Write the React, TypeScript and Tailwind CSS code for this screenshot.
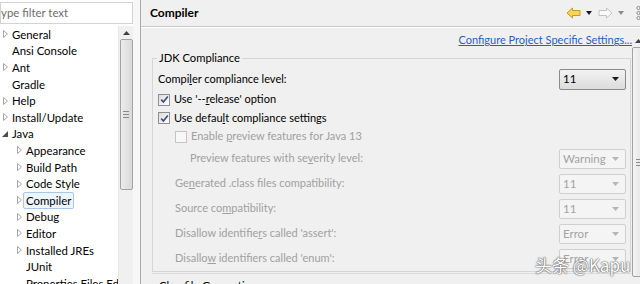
import React from "react";

const font = { fontFamily: 'Lato, "Noto Sans CJK SC", sans-serif' };

type Node = { label: string; level: number; arrow?: "closed" | "open"; selected?: boolean };

const tree: Node[] = [
  { label: "General", level: 0, arrow: "closed" },
  { label: "Ansi Console", level: 0 },
  { label: "Ant", level: 0, arrow: "closed" },
  { label: "Gradle", level: 0 },
  { label: "Help", level: 0, arrow: "closed" },
  { label: "Install/Update", level: 0, arrow: "closed" },
  { label: "Java", level: 0, arrow: "open" },
  { label: "Appearance", level: 1, arrow: "closed" },
  { label: "Build Path", level: 1, arrow: "closed" },
  { label: "Code Style", level: 1, arrow: "closed" },
  { label: "Compiler", level: 1, arrow: "closed", selected: true },
  { label: "Debug", level: 1, arrow: "closed" },
  { label: "Editor", level: 1, arrow: "closed" },
  { label: "Installed JREs", level: 1, arrow: "closed" },
  { label: "JUnit", level: 1 },
  { label: "Properties Files Editor", level: 1 },
];

function TreeArrow({ kind }: { kind?: "closed" | "open" }) {
  if (!kind) return <span className="w-[11px] shrink-0" />;
  return (
    <svg width="11" height="10" viewBox="0 0 11 10" className="shrink-0">
      {kind === "closed" ? (
        <path d="M3.5 1.5 L7.5 5 L3.5 8.5 Z" fill="none" stroke="#a6a6a6" strokeWidth="1" />
      ) : (
        <path d="M8 2 L8 8 L2 8 Z" fill="#4d4d4d" />
      )}
    </svg>
  );
}

function Check({ checked, disabled }: { checked?: boolean; disabled?: boolean }) {
  return (
    <span
      className={`flex h-[12px] w-[12px] shrink-0 items-center justify-center border ${
        disabled ? "border-[#c4c4c4] bg-[#f7f7f7]" : "border-[#8e8f8f] bg-gradient-to-br from-[#dcdcdc] to-[#ffffff]"
      }`}
    >
      {checked && (
        <svg width="9" height="9" viewBox="0 0 9 9">
          <path d="M1.2 4.6 L3.4 7 L7.8 1.4" fill="none" stroke="#3d4c7a" strokeWidth="1.6" />
        </svg>
      )}
    </span>
  );
}

function Select({ value, disabled, tall }: { value: string; disabled?: boolean; tall?: boolean }) {
  return (
    <div
      className={`flex w-[67px] shrink-0 items-center justify-between rounded-[2px] border pl-[3px] pr-[6px] text-[11.5px] ${
        tall ? "h-[21px]" : "h-[20px]"
      } ${
        disabled
          ? "border-[#cfcfcf] bg-[#f4f4f4] text-[#a3a3a3]"
          : "border-[#8a8a8a] bg-gradient-to-b from-[#f2f2f2] to-[#dcdcdc] text-black"
      }`}
    >
      <span>{value}</span>
      <svg width="7" height="4" viewBox="0 0 7 4">
        <path d="M0 0 L7 0 L3.5 4 Z" fill={disabled ? "#b5b5b5" : "#1a1a1a"} />
      </svg>
    </div>
  );
}

function Row({ children, indent, sel, h = "h-[25px]" }: { children: React.ReactNode; indent: string; sel?: React.ReactNode; h?: string }) {
  return (
    <div className={`flex items-center justify-between ${h} ${indent}`}>
      <div className="flex items-center gap-[4px] whitespace-nowrap">{children}</div>
      {sel}
    </div>
  );
}

export default function App() {
  return (
    <div className="relative flex h-[284px] w-[640px] overflow-hidden bg-[#f0f0f0] text-[11px] text-black" style={font}>
      {/* left tree */}
      <div className="flex w-[141px] shrink-0 flex-col border-r border-[#a9a9a9] bg-[#f7f7f7]">
        <div className="flex h-[26px] w-[133px] flex-col bg-white pt-[2px]">
          <div className="flex h-[22px] items-center overflow-hidden border border-[#d3d3d3] text-[11.4px] text-[#6d6d6d]">
            <span className="ml-[-4px] whitespace-nowrap">type filter text</span>
          </div>
        </div>
        <div className="flex min-h-0 flex-1">
          <div className="w-[118px] overflow-hidden bg-white">
            {tree.map((n) => (
              <div
                key={n.label}
                className={`flex h-[16.6px] items-center whitespace-nowrap text-[11.4px] ${n.level === 1 ? "pl-[14px]" : "pl-0"}`}
              >
                <TreeArrow kind={n.arrow} />
                <span
                  className={`ml-[-2px] px-[2px] leading-[15px] ${
                    n.selected ? "rounded-[2px] border border-[#a8c8ea] bg-[#eef6fd]" : "border border-transparent"
                  }`}
                >
                  {n.label}
                </span>
              </div>
            ))}
          </div>
          <div className="flex w-[15px] flex-col items-center border-l border-[#e8e8e8] bg-[#f0f0f0]">
            <div className="flex h-[13px] items-center">
              <svg width="7" height="4" viewBox="0 0 7 4">
                <path d="M0 4 L7 4 L3.5 0 Z" fill="#404040" />
              </svg>
            </div>
            <div className="flex h-[151px] w-[13px] items-center justify-center rounded-[2px] border border-[#a3a3a3] bg-gradient-to-r from-[#ececec] to-[#d9d9d9]">
              <div className="flex flex-col gap-[2px]">
                <span className="h-px w-[6px] bg-[#8a8a8a]" />
                <span className="h-px w-[6px] bg-[#8a8a8a]" />
                <span className="h-px w-[6px] bg-[#8a8a8a]" />
              </div>
            </div>
          </div>
        </div>
      </div>

      {/* right page */}
      <div className="flex min-w-0 flex-1 flex-col">
        <div className="flex h-[27px] shrink-0 items-center justify-between border-b border-[#c9c9c9] pl-[9px]">
          <span className="text-[12px] font-bold">Compiler</span>
          <div className="mr-[-1px] flex items-center">
            <svg width="15" height="12" viewBox="0 0 15 12">
              <path d="M1 6 L6.5 1 L6.5 3.5 L14 3.5 L14 8.5 L6.5 8.5 L6.5 11 Z" fill="#f7d65a" stroke="#c79a1d" strokeWidth="1" />
            </svg>
            <svg width="6" height="4" viewBox="0 0 6 4" className="ml-[5px]">
              <path d="M0 0 L6 0 L3 4 Z" fill="#1a1a1a" />
            </svg>
            <svg width="15" height="12" viewBox="0 0 15 12" className="ml-[6px]">
              <path d="M14 6 L8.5 1 L8.5 3.5 L1 3.5 L1 8.5 L8.5 8.5 L8.5 11 Z" fill="#fbfbfb" stroke="#c2c2c2" strokeWidth="1" />
            </svg>
            <svg width="6" height="4" viewBox="0 0 6 4" className="ml-[5px]">
              <path d="M0 0 L6 0 L3 4 Z" fill="#8c8c8c" />
            </svg>
            <svg width="5" height="16" viewBox="0 0 5 16" className="ml-[12px]">
              <circle cx="2.5" cy="3" r="1.6" fill="none" stroke="#8c8c8c" />
              <circle cx="2.5" cy="8" r="1.6" fill="none" stroke="#8c8c8c" />
              <circle cx="2.5" cy="13" r="1.6" fill="none" stroke="#8c8c8c" />
            </svg>
          </div>
        </div>

        <div className="flex min-h-0 flex-1 border-t border-white">
          <div className="flex w-[491px] shrink-0 flex-col pl-[11px]">
            <div className="flex h-[25px] shrink-0 items-center justify-end">
              <span className="text-[11px] text-[#1d63c2] underline">Configure Project Specific Settings...</span>
            </div>

            <div className="relative mt-[5px] mr-[1px] shrink-0 border border-[#d5d5d5] pl-[5px] pr-[4px] pt-[9px]">
              <span className="absolute left-[4px] top-[-9px] bg-[#f0f0f0] px-[2px] text-[11.2px] leading-[16px]">JDK Compliance</span>
              <Row h="h-[22px]" indent="pl-0" sel={<Select value="11" tall />}>
                <span>
                  Compi<u>l</u>er compliance level:
                </span>
              </Row>
              <Row h="h-[19px]" indent="pl-0">
                <Check checked />
                <span>
                  Use '--<u>r</u>elease' option
                </span>
              </Row>
              <Row h="h-[18px]" indent="pl-0">
                <Check checked />
                <span>
                  Use defau<u>l</u>t compliance settings
                </span>
              </Row>
              <Row h="h-[19px]" indent="pl-[17px]">
                <Check disabled />
                <span className="text-[#a0a0a0]">
                  Enable <u>p</u>review features for Java 13
                </span>
              </Row>
              <Row indent="pl-[32px]" sel={<Select value="Warning" disabled />}>
                <span className="text-[#a0a0a0]">
                  Preview features with se<u>v</u>erity level:
                </span>
              </Row>
              <Row indent="pl-[17px]" sel={<Select value="11" disabled />}>
                <span className="text-[#a0a0a0]">
                  Ge<u>n</u>erated .class files compatibility:
                </span>
              </Row>
              <Row indent="pl-[17px]" sel={<Select value="11" disabled />}>
                <span className="text-[#a0a0a0]">
                  Source co<u>m</u>patibility:
                </span>
              </Row>
              <Row indent="pl-[17px]" sel={<Select value="Error" disabled />}>
                <span className="text-[#a0a0a0]">
                  Disallow identifie<u>r</u>s called 'assert':
                </span>
              </Row>
              <Row indent="pl-[17px]" sel={<Select value="Error" disabled />}>
                <span className="text-[#a0a0a0]">
                  Disallo<u>w</u> identifiers called 'enum':
                </span>
              </Row>
            </div>
            <div className="mt-[1px] border-t border-[#dcdcdc] pl-[7px] pt-[4px] text-[11.2px] leading-[16px]">Classfile Generation</div>
          </div>

          {/* right scrollbar */}
          <div className="mt-[6px] flex w-[17px] shrink-0 flex-col items-start">
            <div className="flex h-[13px] w-full items-center pl-[3px]">
              <svg width="7" height="4" viewBox="0 0 7 4">
                <path d="M0 4 L7 4 L3.5 0 Z" fill="#404040" />
              </svg>
            </div>
            <div className="flex h-[230px] w-[15px] items-center rounded-[2px] border border-[#a3a3a3] bg-gradient-to-r from-[#f4f4f4] to-[#dedede] pl-[3px]">
              <div className="flex flex-col gap-[2px]">
                <span className="h-px w-[4px] bg-[#8a8a8a]" />
                <span className="h-px w-[4px] bg-[#8a8a8a]" />
                <span className="h-px w-[4px] bg-[#8a8a8a]" />
              </div>
            </div>
          </div>
        </div>
      </div>

      {/* watermark */}
      <div
        className="absolute left-[535px] top-[255px] whitespace-nowrap text-[17px] leading-[20px] text-white"
        style={{ fontFamily: '"Noto Sans CJK SC", sans-serif', textShadow: "0 0 2px #555, 0 0 1px #333" }}
      >
        头条 @Kapu
      </div>
    </div>
  );
}
